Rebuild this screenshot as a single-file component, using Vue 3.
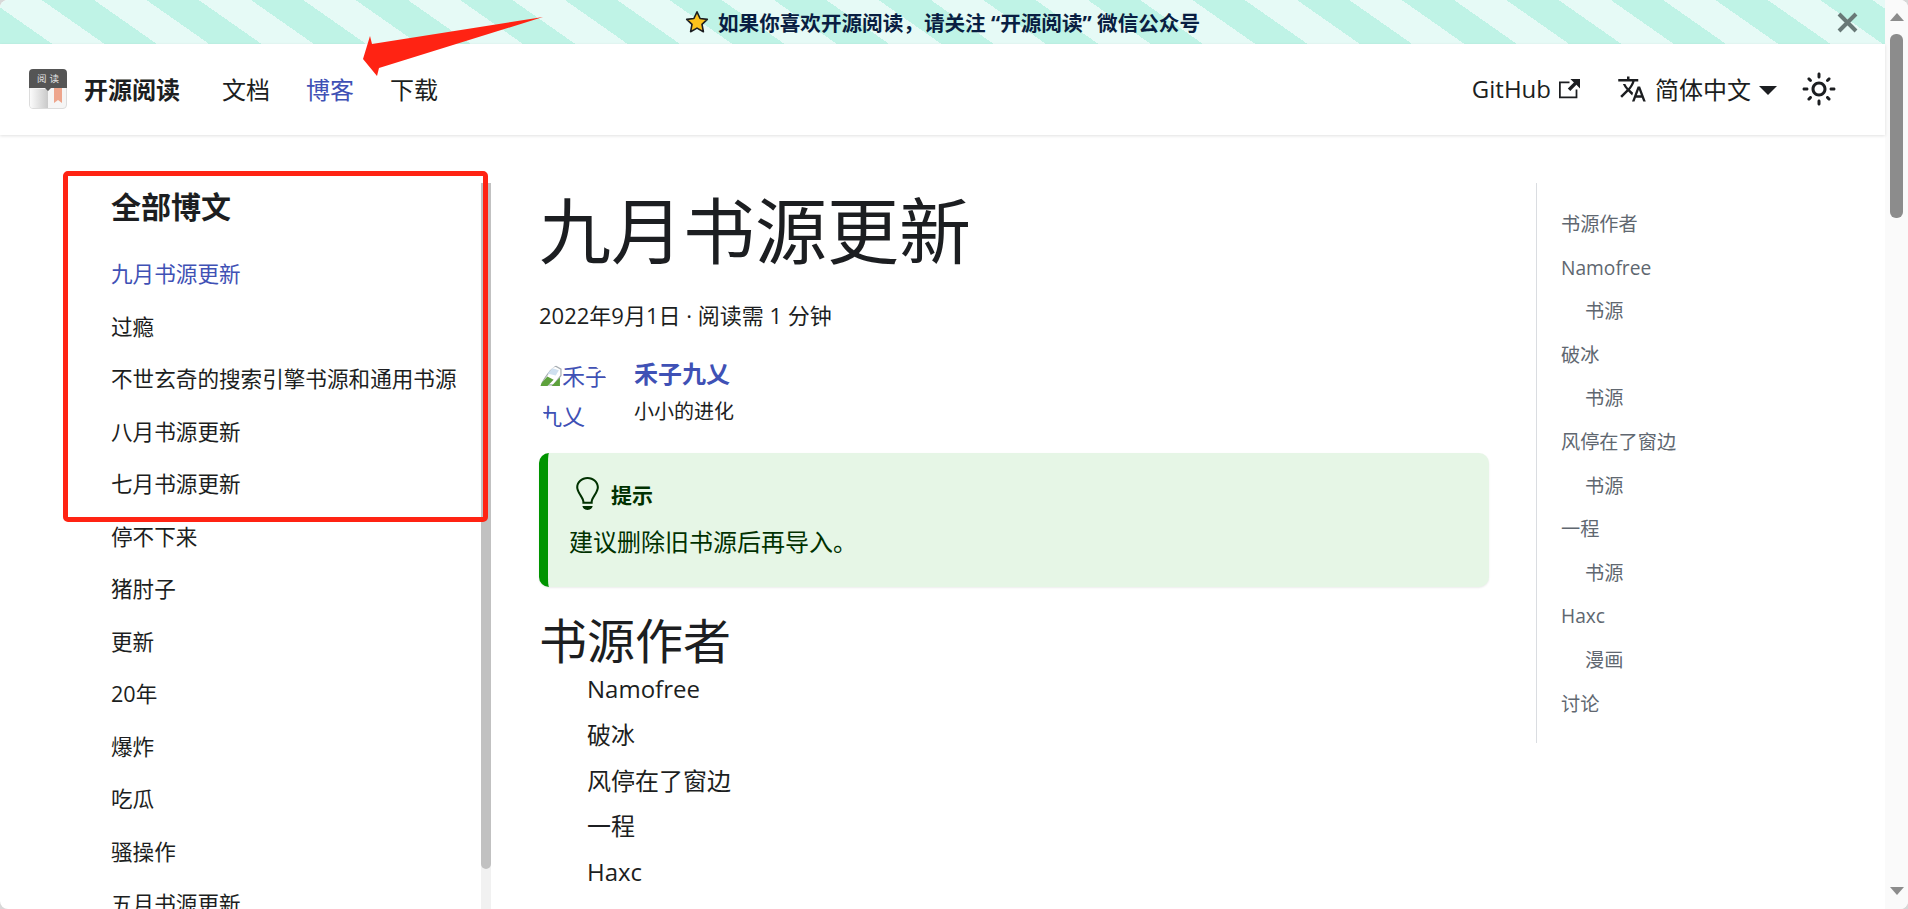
<template>
  <div class="window">
    <div class="page">
      <div class="announcement">
        <span></span>
        <div class="announcement-text">
          <svg class="star" viewBox="0 0 24 24"><path d="M12 1.8l3.1 6.7 7.2.9-5.3 5 1.4 7.3-6.4-3.6-6.4 3.6 1.4-7.3-5.3-5 7.2-.9z" fill="#fcc21b" stroke="#1c1e21" stroke-width="1.6" stroke-linejoin="round" /></svg>
          <span>如果你喜欢开源阅读，请关注 “开源阅读” 微信公众号</span>
        </div>
        <svg class="close" viewBox="0 0 21 21"><path d="M2 2l17 17M19 2L2 19" stroke="#687977" stroke-width="4" fill="none" /></svg>
      </div>

      <nav class="navbar">
        <svg class="logo" viewBox="0 0 38 40">
          <defs>
            <linearGradient id="leftPage" x1="0" x2="1" y1="0" y2="0">
              <stop offset="0" stop-color="#fbfbfb" />
              <stop offset="1" stop-color="#c9c9c9" />
            </linearGradient>
          </defs>
          <rect x="0.5" y="10" width="37" height="29.5" rx="3.5" fill="#f5f5f5" stroke="#dcdcdc" />
          <path d="M1 20h18v19H4a3 3 0 0 1-3-3z" fill="url(#leftPage)" />
          <path d="M0 4a4 4 0 0 1 4-4h30a4 4 0 0 1 4 4v15H22l-3 3-3-3H0z" fill="#555" />
          <text x="8" y="12.5" font-size="9.5" letter-spacing="3" fill="#e4e4e4" font-family="'Noto Sans CJK SC', sans-serif">阅读</text>
          <path d="M25 19h8v15l-4-3-4 3z" fill="#eea58c" />
        </svg>
        <span class="brand">开源阅读</span>
        <div class="nav-links">
          <a v-for="link in navLinks" :key="link" class="nav-link" :class="{ active: link === '博客' }">{{ link }}</a>
        </div>
        <div class="nav-right">
          <a class="github">GitHub
            <svg class="ext" viewBox="0 0 24 24"><path fill="#1c1e21" d="M21 13v10h-21v-19h12v2h-10v15h17v-8h2zm3-12h-10.988l4.035 4-6.977 7.07 2.828 2.828 6.977-7.07 4.125 4.172v-11z" /></svg>
          </a>
          <div class="lang">
            <svg class="lang-icon" viewBox="0 0 24 24"><path fill="#1c1e21" d="M12.87 15.07l-2.54-2.51.03-.03c1.74-1.94 2.98-4.17 3.71-6.53H17V4h-7V2H8v2H1v1.99h11.17C11.5 7.92 10.44 9.75 9 11.35 8.07 10.32 7.3 9.19 6.69 8h-2c.73 1.63 1.73 3.17 2.98 4.56l-5.09 5.02L4 19l5-5 3.11 3.11.76-2.04zM18.5 10h-2L12 22h2l1.12-3h4.75L21 22h2l-4.5-12zm-2.62 7l1.62-4.33L19.12 17h-3.24z" /></svg>
            <span>简体中文</span>
            <i class="caret"></i>
          </div>
          <svg class="sun" viewBox="0 0 24 24"><path fill="#1c1e21" d="M12,9c1.65,0,3,1.35,3,3s-1.35,3-3,3s-3-1.35-3-3S10.35,9,12,9 M12,7c-2.76,0-5,2.24-5,5s2.24,5,5,5s5-2.24,5-5 S14.76,7,12,7L12,7z M2,13l2,0c0.55,0,1-0.45,1-1s-0.45-1-1-1l-2,0c-0.55,0-1,0.45-1,1S1.45,13,2,13z M20,13l2,0c0.55,0,1-0.45,1-1 s-0.45-1-1-1l-2,0c-0.55,0-1,0.45-1,1S19.45,13,20,13z M11,2v2c0,0.55,0.45,1,1,1s1-0.45,1-1V2c0-0.55-0.45-1-1-1S11,1.45,11,2z M11,20v2c0,0.55,0.45,1,1,1s1-0.45,1-1v-2c0-0.55-0.45-1-1-1C11.45,19,11,19.45,11,20z M5.99,4.58c-0.39-0.39-1.03-0.39-1.41,0 c-0.39,0.39-0.39,1.03,0,1.41l1.06,1.06c0.39,0.39,1.03,0.39,1.41,0s0.39-1.03,0-1.41L5.99,4.58z M18.36,16.95 c-0.39-0.39-1.03-0.39-1.41,0c-0.39,0.39-0.39,1.03,0,1.41l1.06,1.06c0.39,0.39,1.03,0.39,1.41,0c0.39-0.39,0.39-1.03,0-1.41 L18.36,16.95z M19.42,5.99c0.39-0.39,0.39-1.03,0-1.41c-0.39-0.39-1.03-0.39-1.41,0l-1.06,1.06c-0.39,0.39-0.39,1.03,0,1.41 s1.03,0.39,1.41,0L19.42,5.99z M7.05,18.36c0.39-0.39,0.39-1.03,0-1.41c-0.39-0.39-1.03-0.39-1.41,0l-1.06,1.06 c-0.39,0.39-0.39,1.03,0,1.41s1.03,0.39,1.41,0L7.05,18.36z" /></svg>
        </div>
      </nav>

      <div class="content">
        <aside class="sidebar">
          <div class="sidebar-inner">
            <h4 class="sidebar-title">全部博文</h4>
            <a v-for="(post, i) in posts" :key="post" class="sidebar-item" :class="{ active: i === 0 }">{{ post }}</a>
          </div>
          <div class="sidebar-track"><div class="sidebar-thumb"></div></div>
        </aside>

        <main class="article">
          <h1>九月书源更新</h1>
          <div class="date">2022年9月1日 · 阅读需 1 分钟</div>
          <div class="author">
            <div class="avatar">
              <div class="avatar-alt">
                <svg class="broken" viewBox="0 0 22 20">
                  <path d="M1 19L13 2l3-1 5 3v6L14 19z" fill="#fff" stroke="#a9afb4" stroke-width="1.2" />
                  <path d="M0 20l8-9 6 3-6 6z" fill="#5da13c" />
                  <path d="M12 20l8-8v8z" fill="#5da13c" />
                  <path d="M8 8l5-5 6 2-3 5z" fill="#cfe0f0" />
                </svg><span>禾子九乂</span>
              </div>
            </div>
            <div class="author-info">
              <a class="author-name">禾子九乂</a>
              <div class="author-title">小小的进化</div>
            </div>
          </div>
          <div class="tip">
            <div class="tip-head">
              <svg class="bulb" viewBox="0 0 12 16"><path fill="#003100" d="M6.5 0C3.48 0 1 2.19 1 5c0 .92.55 2.25 1 3 1.34 2.25 1.78 2.78 2 4v1h5v-1c.22-1.22.66-1.75 2-4 .45-.75 1-2.08 1-3 0-2.81-2.48-5-5.5-5zm3.64 7.48c-.25.44-.47.8-.67 1.11-.86 1.41-1.25 2.06-1.45 3.23-.02.05-.02.11-.02.17H5c0-.06 0-.13-.02-.17-.2-1.17-.59-1.83-1.45-3.23-.2-.31-.42-.67-.67-1.11C2.44 6.78 2 5.65 2 5c0-2.2 2.02-4 4.5-4 1.22 0 2.36.42 3.22 1.19C10.55 2.94 11 3.94 11 5c0 .66-.44 1.78-.86 2.48zM4 14h5c-.23 1.14-1.3 2-2.5 2s-2.27-.86-2.5-2z" /></svg>
              <span>提示</span>
            </div>
            <p>建议删除旧书源后再导入。</p>
          </div>
          <h2>书源作者</h2>
          <ul class="authors">
            <li v-for="name in authors" :key="name">{{ name }}</li>
          </ul>
        </main>

        <div class="toc">
          <a v-for="item in toc" :key="item.id" class="toc-item" :class="{ sub: item.sub }">{{ item.text }}</a>
        </div>
      </div>
    </div>

    <div class="scrollbar">
      <i class="arrow-up"></i>
      <div class="scroll-thumb"></div>
      <i class="arrow-down"></i>
    </div>

    <!-- red annotation drawn over the page -->
    <div class="mark-box"></div>
    <svg class="mark-arrow" viewBox="0 0 190 70"><path d="M3 44L10 21l2 8 171-27L19 53l-2 8z" fill="#ff2313" /></svg>
  </div>
</template>

<script setup>
const navLinks = ['文档', '博客', '下载']

const posts = [
  '九月书源更新',
  '过瘾',
  '不世玄奇的搜索引擎书源和通用书源',
  '八月书源更新',
  '七月书源更新',
  '停不下来',
  '猪肘子',
  '更新',
  '20年',
  '爆炸',
  '吃瓜',
  '骚操作',
  '五月书源更新'
]

const authors = ['Namofree', '破冰', '风停在了窗边', '一程', 'Haxc']

const toc = [
  { id: 1, text: '书源作者' },
  { id: 2, text: 'Namofree' },
  { id: 3, text: '书源', sub: true },
  { id: 4, text: '破冰' },
  { id: 5, text: '书源', sub: true },
  { id: 6, text: '风停在了窗边' },
  { id: 7, text: '书源', sub: true },
  { id: 8, text: '一程' },
  { id: 9, text: '书源', sub: true },
  { id: 10, text: 'Haxc' },
  { id: 11, text: '漫画', sub: true },
  { id: 12, text: '讨论' }
]
</script>

<style>
html, body {
  margin: 0;
  height: 100%;
  overflow: hidden;
  background: #d8d8d8;
}
</style>

<style scoped>
.window {
  position: relative;
  display: flex;
  height: 100vh;
  overflow: hidden;
  border-radius: 8px;
  background: #fff;
  color: #1c1e21;
  font-family: "Open Sans", "Noto Sans CJK SC", sans-serif;
}

.page {
  flex: 1;
  min-width: 0;
  display: flex;
  flex-direction: column;
}

.announcement {
  flex: none;
  height: 44px;
  display: grid;
  grid-template-columns: 1fr auto 1fr;
  align-items: center;
  background: repeating-linear-gradient(35deg, #bff3e6, #bff3e6 30px, #e6faf6 30px, #e6faf6 60px);
}

.announcement-text {
  display: flex;
  align-items: center;
  gap: 9px;
  font-size: 20.6px;
  font-weight: 700;
  color: #091e42;
}

.star {
  width: 24px;
  height: 24px;
}

.close {
  width: 21px;
  height: 21px;
  justify-self: end;
  margin-right: 27px;
}

.navbar {
  flex: none;
  position: relative;
  height: 91px;
  display: flex;
  align-items: center;
  padding: 0 48px 2px 29px;
  box-sizing: border-box;
  background: #fff;
  box-shadow: 0 1px 3px rgba(0, 0, 0, 0.12);
  font-size: 24px;
}

.logo {
  width: 38px;
  height: 40px;
  margin-right: 17px;
}

.brand {
  font-weight: 700;
  margin-right: 42px;
}

.nav-links {
  display: flex;
  gap: 36px;
}

.nav-link.active,
.sidebar-item.active {
  color: #3f51b5;
}

.nav-right {
  margin-left: auto;
  display: flex;
  align-items: center;
}

.github {
  display: flex;
  align-items: center;
  gap: 8px;
  margin-right: 37px;
}

.ext {
  width: 21px;
  height: 21px;
}

.lang {
  display: flex;
  align-items: center;
  margin-right: 24px;
}

.lang-icon {
  width: 30px;
  height: 30px;
  margin-right: 8px;
}

.caret {
  width: 0;
  height: 0;
  margin-left: 8px;
  margin-top: 3px;
  border-top: 9px solid #1c1e21;
  border-left: 9px solid transparent;
  border-right: 9px solid transparent;
}

.sun {
  width: 36px;
  height: 36px;
}

.content {
  flex: 1;
  min-height: 0;
  display: flex;
  overflow: hidden;
}

.sidebar {
  flex: none;
  width: 491px;
  display: flex;
}

.sidebar-inner {
  flex: 1;
  padding: 48px 0 0 111px;
}

.sidebar-title {
  margin: 0 0 17px;
  font-size: 30px;
  line-height: 48px;
  font-weight: 700;
}

.sidebar-item {
  display: block;
  font-size: 21.6px;
  line-height: 52.5px;
  white-space: nowrap;
}

.sidebar-track {
  flex: none;
  width: 10px;
  margin-top: 48px;
  background: #f1f1f1;
}

.sidebar-thumb {
  height: 686px;
  background: #c1c1c1;
  border-radius: 0 0 5px 5px;
}

.article {
  flex: none;
  width: 950px;
  margin-left: 48px;
  padding-top: 50px;
}

h1 {
  margin: 0;
  font-size: 72px;
  line-height: 90px;
  font-weight: 400;
}

.date {
  margin-top: 25px;
  font-size: 22px;
  line-height: 30px;
}

.author {
  margin-top: 30px;
  display: flex;
}

.avatar {
  flex: none;
  width: 72px;
  height: 72px;
  overflow: hidden;
  border-radius: 50%;
  font-size: 23px;
  line-height: 40px;
  color: #3f51b5;
}

.avatar-alt {
  margin-top: -4px;
  word-break: break-all;
}

.broken {
  width: 23px;
  height: 21px;
  vertical-align: -1px;
}

.author-info {
  margin-left: 23px;
  margin-top: -1px;
}

.author-name {
  display: block;
  font-size: 24px;
  line-height: 30px;
  font-weight: 700;
  color: #3f51b5;
}

.author-title {
  margin-top: 8px;
  font-size: 20px;
  line-height: 30px;
}

.tip {
  margin-top: 21px;
  height: 134px;
  box-sizing: border-box;
  padding: 24px 21px 0;
  border-left: 9px solid #009400;
  border-radius: 10px;
  background: #e6f6e6;
  color: #003100;
  box-shadow: 0 1px 2px rgba(0, 0, 0, 0.08);
}

.tip-head {
  display: flex;
  align-items: center;
  padding-left: 5px;
  font-size: 21px;
  font-weight: 700;
}

.bulb {
  width: 25px;
  height: 33px;
  margin-right: 12px;
}

.tip p {
  margin: 14px 0 0;
  font-size: 24px;
  line-height: 36px;
}

h2 {
  margin: 29px 0 0;
  font-size: 48px;
  line-height: 50px;
  font-weight: 400;
}

.authors {
  margin: 0;
  padding: 0 0 0 48px;
  list-style: none;
  font-size: 24px;
  line-height: 45.8px;
}

.toc {
  flex: none;
  align-self: flex-start;
  width: 300px;
  margin: 48px 0 0 47px;
  padding: 19px 0 18px 24px;
  box-sizing: border-box;
  border-left: 1.5px solid #dadde1;
}

.toc-item {
  display: block;
  font-size: 19.2px;
  line-height: 43.6px;
  color: #606770;
}

.toc-item.sub {
  padding-left: 24px;
}

.scrollbar {
  flex: none;
  width: 23px;
  display: flex;
  flex-direction: column;
  align-items: center;
  box-sizing: border-box;
  padding: 13px 0 14px;
  background: #fafafa;
}

.arrow-up,
.arrow-down {
  width: 0;
  height: 0;
  border-left: 7.5px solid transparent;
  border-right: 7.5px solid transparent;
}

.arrow-up {
  border-bottom: 8px solid #8c8c8c;
}

.arrow-down {
  margin-top: auto;
  border-top: 8px solid #8c8c8c;
}

.scroll-thumb {
  width: 13px;
  height: 184px;
  margin-top: 13px;
  border-radius: 6px;
  background: #8c8c8c;
}

.mark-box {
  position: absolute;
  left: 63px;
  top: 171px;
  width: 425px;
  height: 351px;
  box-sizing: border-box;
  border: 5px solid #ff2313;
  border-radius: 5px;
}

.mark-arrow {
  position: absolute;
  left: 360px;
  top: 15px;
  width: 190px;
  height: 70px;
}
</style>
